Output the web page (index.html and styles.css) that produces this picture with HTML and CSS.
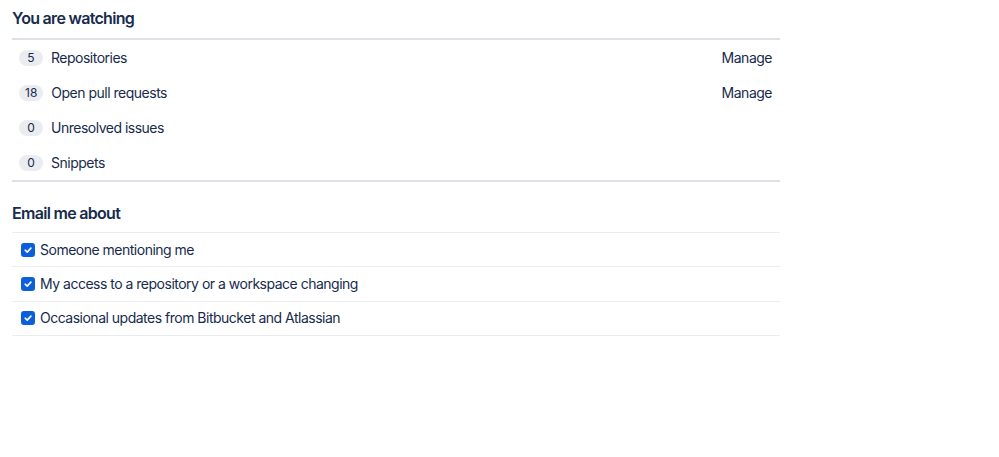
FILE: index.html
```html
<!DOCTYPE html>
<html>
<head>
<meta charset="utf-8">
<link rel="stylesheet" href="styles.css">
</head>
<body>
<div class="page">
  <section class="watching">
    <h2 class="heading">You are watching</h2>
    <ul class="watch-list">
      <li class="watch-row"><span class="left"><span class="badge">5</span><span class="label">Repositories</span></span><a class="manage" href="#">Manage</a></li>
      <li class="watch-row"><span class="left"><span class="badge">18</span><span class="label">Open pull requests</span></span><a class="manage" href="#">Manage</a></li>
      <li class="watch-row"><span class="left"><span class="badge">0</span><span class="label">Unresolved issues</span></span></li>
      <li class="watch-row"><span class="left"><span class="badge">0</span><span class="label">Snippets</span></span></li>
    </ul>
  </section>
  <section class="email">
    <h2 class="heading heading-email">Email me about</h2>
    <ul class="email-list">
      <li class="email-row"><span class="check"><svg viewBox="0 0 14 14" width="14" height="14"><rect x="0" y="0" width="14" height="14" rx="3" fill="#0c5fdb"/><path d="M4.2 7.2 L6.2 9.1 L9.9 5.1" fill="none" stroke="#fff" stroke-width="1.6" stroke-linecap="round" stroke-linejoin="round"/></svg></span><span class="label">Someone mentioning me</span></li>
      <li class="email-row"><span class="check"><svg viewBox="0 0 14 14" width="14" height="14"><rect x="0" y="0" width="14" height="14" rx="3" fill="#0c5fdb"/><path d="M4.2 7.2 L6.2 9.1 L9.9 5.1" fill="none" stroke="#fff" stroke-width="1.6" stroke-linecap="round" stroke-linejoin="round"/></svg></span><span class="label">My access to a repository or a workspace changing</span></li>
      <li class="email-row"><span class="check"><svg viewBox="0 0 14 14" width="14" height="14"><rect x="0" y="0" width="14" height="14" rx="3" fill="#0c5fdb"/><path d="M4.2 7.2 L6.2 9.1 L9.9 5.1" fill="none" stroke="#fff" stroke-width="1.6" stroke-linecap="round" stroke-linejoin="round"/></svg></span><span class="label">Occasional updates from Bitbucket and Atlassian</span></li>
    </ul>
  </section>
</div>
</body>
</html>
```

FILE: styles.css
```css
html, body {
  margin: 0;
  padding: 0;
  background: #ffffff;
}
body {
  font-family: Inter, "Noto Sans", "Liberation Sans", sans-serif;
  color: #172b4d;
  font-size: 14px;
  letter-spacing: -0.5px;
}
.page {
  width: 768px;
  padding: 0 12px;
}
.heading {
  margin: 0;
  padding: 8px 0 10px;
  font-size: 16px;
  line-height: 20px;
  font-weight: 600;
  letter-spacing: -0.7px;
  color: #172b4d;
  border-bottom: 2px solid #dfe1e6;
}
.watch-list, .email-list {
  list-style: none;
  margin: 0;
  padding: 0;
}
.watch-list {
  border-bottom: 2px solid #dfe1e6;
}
.watch-row {
  display: flex;
  align-items: center;
  justify-content: space-between;
  height: 35px;
  padding: 0 8px 0 7px;
  box-sizing: border-box;
}
.left {
  display: flex;
  align-items: center;
  gap: 8px;
}
.badge {
  display: inline-block;
  box-sizing: border-box;
  min-width: 24px;
  padding: 0 6px;
  height: 16px;
  line-height: 16px;
  border-radius: 8px;
  background: #ebecf0;
  font-size: 12px;
  letter-spacing: 0;
  text-align: center;
  color: #172b4d;
}
.label {
  line-height: 20px;
}
.manage {
  color: #172b4d;
  text-decoration: none;
}
.heading-email {
  margin-top: 21px;
  padding: 0 0 9px;
  border-bottom: 1px solid #ebecf0;
}
.email-row {
  display: flex;
  align-items: center;
  gap: 5px;
  height: 33.4px;
  padding: 0 9px;
  border-bottom: 1px solid #ebecf0;
}
.check {
  display: flex;
  width: 14px;
  height: 14px;
}
```
